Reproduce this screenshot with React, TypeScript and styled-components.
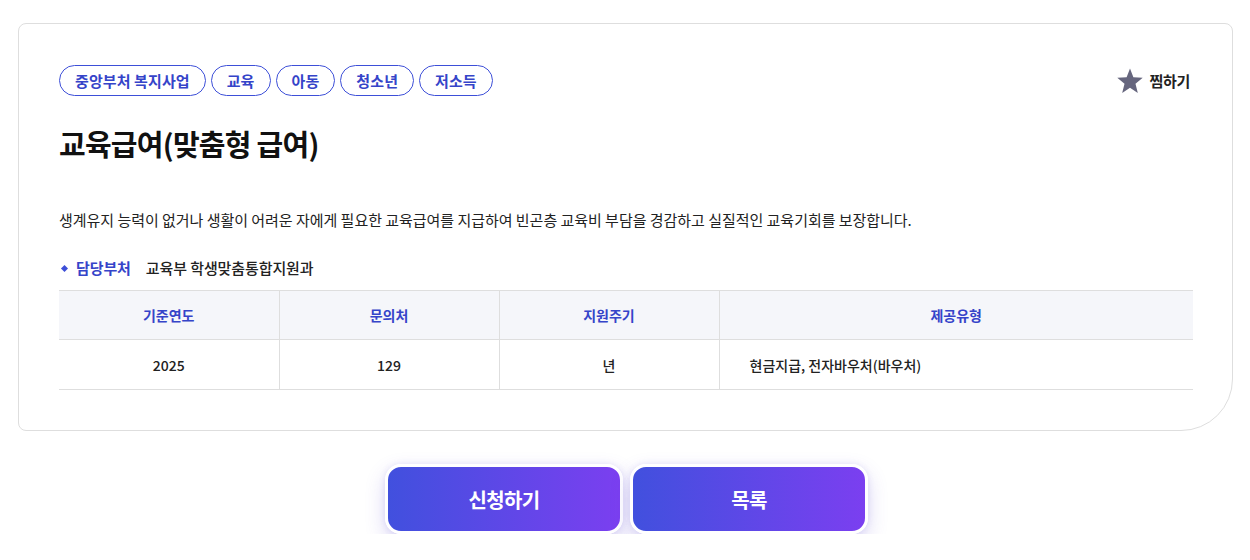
import React from "react";
import styled, { createGlobalStyle } from "styled-components";

const Global = createGlobalStyle`
  html, body { margin: 0; padding: 0; background: #fff; }
  body { font-family: "Noto Sans CJK KR", "Noto Sans", sans-serif; color: #222; }
  * { box-sizing: border-box; }
`;

const Page = styled.div`
  padding: 23px 17px 0 18px;
  width: 1250px;
`;

const Card = styled.section`
  border: 1px solid #dedede;
  border-radius: 8px 8px 52px 8px;
  padding: 41px 39px 40px 40px;
  background: #fff;
`;

const TopRow = styled.div`
  display: flex;
  justify-content: space-between;
  align-items: center;
`;

const Tags = styled.div`
  display: flex;
  gap: 5px;
`;

const Tag = styled.span`
  display: inline-flex;
  align-items: center;
  height: 31px;
  padding: 0 15px;
  border: 1px solid #3d4fd8;
  border-radius: 16px;
  color: #3544c9;
  font-size: 15px;
  font-weight: 700;
  letter-spacing: 0.1px;
`;

const Favorite = styled.button`
  display: flex;
  align-items: center;
  gap: 5px;
  border: 0;
  background: none;
  padding: 0;
  margin-right: 3px;
  font-family: inherit;
  font-size: 15px;
  font-weight: 700;
  color: #222;
  letter-spacing: -0.3px;
  cursor: pointer;
`;

const Title = styled.h1`
  margin: 27px 0 0;
  font-size: 29px;
  font-weight: 700;
  letter-spacing: -0.75px;
  color: #111;
  line-height: 40px;
`;

const Desc = styled.p`
  margin: 46px 0 0;
  font-size: 15px;
  letter-spacing: -0.03px;
  line-height: 22px;
  color: #222;
`;

const Dept = styled.div`
  margin-top: 26px;
  display: flex;
  align-items: center;
  font-size: 15px;
  letter-spacing: -0.1px;
  line-height: 22px;
`;

const Bullet = styled.span`
  width: 5px;
  height: 5px;
  background: #3d4fd8;
  transform: rotate(45deg);
  margin: 0 9px 0 3px;
`;

const DeptLabel = styled.span`
  color: #3544c9;
  font-weight: 700;
  margin-right: 15px;
`;

const DeptValue = styled.span`
  color: #222;
  font-weight: 500;
`;

const Table = styled.table`
  margin-top: 11px;
  width: 100%;
  border-collapse: collapse;
  table-layout: fixed;
  font-size: 14px;
  letter-spacing: 0;
`;

const Th = styled.th<{ $w?: number }>`
  width: ${(p) => (p.$w ? `${p.$w}px` : "auto")};
  height: 49px;
  background: #f5f6fa;
  color: #3544c9;
  font-weight: 700;
  border-top: 1px solid #dedede;
  border-bottom: 1px solid #dedede;
  border-left: 1px solid #dedede;
  &:first-child { border-left: 0; }
`;

const Td = styled.td<{ $left?: boolean }>`
  height: 50px;
  text-align: ${(p) => (p.$left ? "left" : "center")};
  padding: ${(p) => (p.$left ? "0 0 0 30px" : "0")};
  color: #222;
  font-weight: 500;
  border-bottom: 1px solid #dedede;
  border-left: 1px solid #dedede;
  &:first-child { border-left: 0; }
`;

const Actions = styled.div`
  display: flex;
  justify-content: center;
  gap: 7px;
  margin-top: 33px;
  padding-left: 2px;
`;

const ActionButton = styled.button`
  width: 238px;
  height: 70px;
  border: 3px solid #fff;
  border-radius: 16px;
  background: linear-gradient(90deg, #4150de 0%, #7b3ff0 100%);
  box-shadow: 0 8px 20px rgba(90, 70, 210, 0.22), 0 0 6px rgba(90, 70, 210, 0.12);
  color: #fff;
  font-family: inherit;
  font-size: 20px;
  font-weight: 700;
  letter-spacing: -0.6px;
  cursor: pointer;
`;

const StarIcon = () => (
  <svg width="28" height="28" viewBox="0 0 24 24" aria-hidden="true">
    <path
      d="M12 1.3l2.9 7.5 8 .5-6.2 5.1 2 7.8L12 17.8l-6.7 4.4 2-7.8L1.1 9.3l8-.5z"
      fill="#66667e"
    />
  </svg>
);

const tags = ["중앙부처 복지사업", "교육", "아동", "청소년", "저소득"];

export default function App() {
  return (
    <>
      <Global />
      <Page>
        <Card>
          <TopRow>
            <Tags>
              {tags.map((t) => (
                <Tag key={t}>{t}</Tag>
              ))}
            </Tags>
            <Favorite>
              <StarIcon />
              찜하기
            </Favorite>
          </TopRow>
          <Title>교육급여(맞춤형 급여)</Title>
          <Desc>
            생계유지 능력이 없거나 생활이 어려운 자에게 필요한 교육급여를 지급하여 빈곤층 교육비 부담을 경감하고 실질적인 교육기회를 보장합니다.
          </Desc>
          <Dept>
            <Bullet />
            <DeptLabel>담당부처</DeptLabel>
            <DeptValue>교육부 학생맞춤통합지원과</DeptValue>
          </Dept>
          <Table>
            <thead>
              <tr>
                <Th $w={220}>기준연도</Th>
                <Th $w={220}>문의처</Th>
                <Th $w={220}>지원주기</Th>
                <Th>제공유형</Th>
              </tr>
            </thead>
            <tbody>
              <tr>
                <Td>2025</Td>
                <Td>129</Td>
                <Td>년</Td>
                <Td $left>현금지급, 전자바우처(바우처)</Td>
              </tr>
            </tbody>
          </Table>
        </Card>
        <Actions>
          <ActionButton>신청하기</ActionButton>
          <ActionButton>목록</ActionButton>
        </Actions>
      </Page>
    </>
  );
}
